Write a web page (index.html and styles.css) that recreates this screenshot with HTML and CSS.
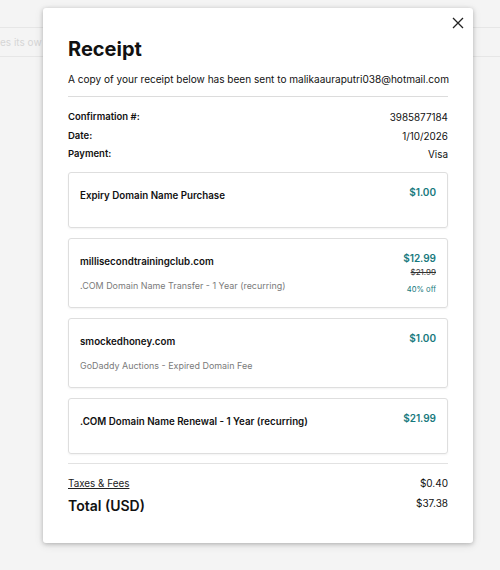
FILE: index.html
```html
<!DOCTYPE html>
<html lang="en">
<head>
<meta charset="utf-8">
<title>Receipt</title>
<link rel="stylesheet" href="styles.css">
</head>
<body>
  <div class="page">
    <div class="page-row"></div>
    <div class="page-row"><span class="page-text">es its ow</span></div>
  </div>

  <div class="modal">
    <button class="close" aria-label="Close">
      <svg width="12" height="12" viewBox="0 0 12 12"><path d="M1 1L11 11M11 1L1 11" stroke="#222" stroke-width="1.3" fill="none"/></svg>
    </button>
    <h1 class="title">Receipt</h1>
    <p class="lead">A copy of your receipt below has been sent to malikaauraputri038@hotmail.com</p>
    <hr class="divider">
    <div class="meta">
      <div class="meta-row"><span class="meta-label">Confirmation #:</span><span class="meta-value">3985877184</span></div>
      <div class="meta-row"><span class="meta-label">Date:</span><span class="meta-value">1/10/2026</span></div>
      <div class="meta-row"><span class="meta-label">Payment:</span><span class="meta-value">Visa</span></div>
    </div>

    <div class="items">
      <div class="card card--single">
        <div class="card-main"><div class="card-title">Expiry Domain Name Purchase</div></div>
        <div class="card-price"><div class="price">$1.00</div></div>
      </div>
      <div class="card">
        <div class="card-main">
          <div class="card-title">millisecondtrainingclub.com</div>
          <div class="card-sub">.COM Domain Name Transfer - 1 Year (recurring)</div>
        </div>
        <div class="card-price">
          <div class="price">$12.99</div>
          <div class="price-old">$21.99</div>
          <div class="price-off">40% off</div>
        </div>
      </div>
      <div class="card">
        <div class="card-main">
          <div class="card-title">smockedhoney.com</div>
          <div class="card-sub">GoDaddy Auctions - Expired Domain Fee</div>
        </div>
        <div class="card-price"><div class="price">$1.00</div></div>
      </div>
      <div class="card card--single">
        <div class="card-main"><div class="card-title">.COM Domain Name Renewal - 1 Year (recurring)</div></div>
        <div class="card-price"><div class="price">$21.99</div></div>
      </div>
    </div>

    <hr class="divider divider--bottom">
    <div class="totals">
      <div class="tax-row"><a class="tax-link" href="#">Taxes &amp; Fees</a><span class="tax-value">$0.40</span></div>
      <div class="total-row"><span class="total-label">Total (USD)</span><span class="total-value">$37.38</span></div>
    </div>
  </div>
</body>
</html>
```

FILE: styles.css
```css
* { box-sizing: border-box; }
html, body { margin: 0; padding: 0; }
body {
  background: #f4f4f4;
  font-family: Inter, "Liberation Sans", sans-serif;
  color: #111;
  width: 500px;
  height: 570px;
  overflow: hidden;
}
.page-row {
  height: 29px;
  border-bottom: 1px solid #e6e6e6;
  display: flex;
  align-items: center;
}
.page-row:first-child { height: 28px; }
.page-text { font-size: 10px; color: #d6d6d6; white-space: nowrap; }

.modal {
  position: absolute;
  left: 43px;
  top: 8px;
  width: 430px;
  height: 535px;
  background: #fff;
  border-radius: 3px;
  box-shadow: 0 1px 4px rgba(0,0,0,0.22), 0 2px 10px rgba(0,0,0,0.10);
  padding: 27px 25px 0 25px;
}
.close {
  position: absolute;
  top: 8px;
  right: 8px;
  width: 14px;
  height: 14px;
  border: 0;
  background: none;
  padding: 1px;
  display: flex;
}
.title {
  margin: 0;
  font-size: 20px;
  line-height: 28px;
  font-weight: 700;
  color: #111;
}
.lead {
  margin: 8px 0 0 0;
  font-size: 10.05px;
  line-height: 16px;
  color: #111;
  white-space: nowrap;
}
.divider {
  border: 0;
  border-top: 1px solid #dcdcdc;
  margin: 9px 0 0 0;
  height: 0;
}
.meta { margin-top: 11px; }
.meta-row {
  display: flex;
  justify-content: space-between;
  line-height: 18.5px;
  font-size: 9.5px;
}
.meta-label { font-weight: 600; }
.meta-value { font-weight: 400; font-size: 9.9px; }

.items {
  margin-top: 8px;
  display: flex;
  flex-direction: column;
  gap: 10px;
}
.card {
  border: 1px solid #dedede;
  border-radius: 3px;
  box-shadow: 0 1px 2px rgba(0,0,0,0.05);
  padding: 12px 11px 11px 11px;
  display: flex;
  justify-content: space-between;
  align-items: flex-start;
}
.card--single { padding-bottom: 20px; }
.card-main { padding-top: 0; }
.card-title {
  font-size: 9.75px;
  font-weight: 600;
  line-height: 22px;
  color: #111;
}
.card-sub {
  margin-top: 3px;
  font-size: 8.95px;
  line-height: 20px;
  color: #7a7a7a;
}
.card-price {
  text-align: right;
  display: flex;
  flex-direction: column;
  align-items: flex-end;
}
.price {
  font-size: 10px;
  font-weight: 600;
  line-height: 14px;
  color: #17797d;
}
.price-old {
  margin-top: 1px;
  font-size: 8px;
  line-height: 12px;
  color: #333;
  text-decoration: line-through;
}
.price-off {
  margin-top: 6px;
  font-size: 7.6px;
  line-height: 12px;
  color: #17797d;
}
.divider--bottom { margin-top: 9px; border-top-color: #e2e2e2; }

.totals { margin-top: 11px; }
.tax-row {
  display: flex;
  justify-content: space-between;
  align-items: center;
  line-height: 16px;
}
.tax-link {
  font-size: 9.9px;
  color: #222;
  text-decoration: underline;
}
.tax-value { font-size: 10px; color: #111; }
.total-row {
  display: flex;
  justify-content: space-between;
  align-items: flex-start;
  margin-top: 4px;
}
.total-label {
  font-size: 14px;
  font-weight: 600;
  line-height: 22px;
}
.total-value {
  font-size: 10px;
  line-height: 16px;
  color: #111;
}
```
